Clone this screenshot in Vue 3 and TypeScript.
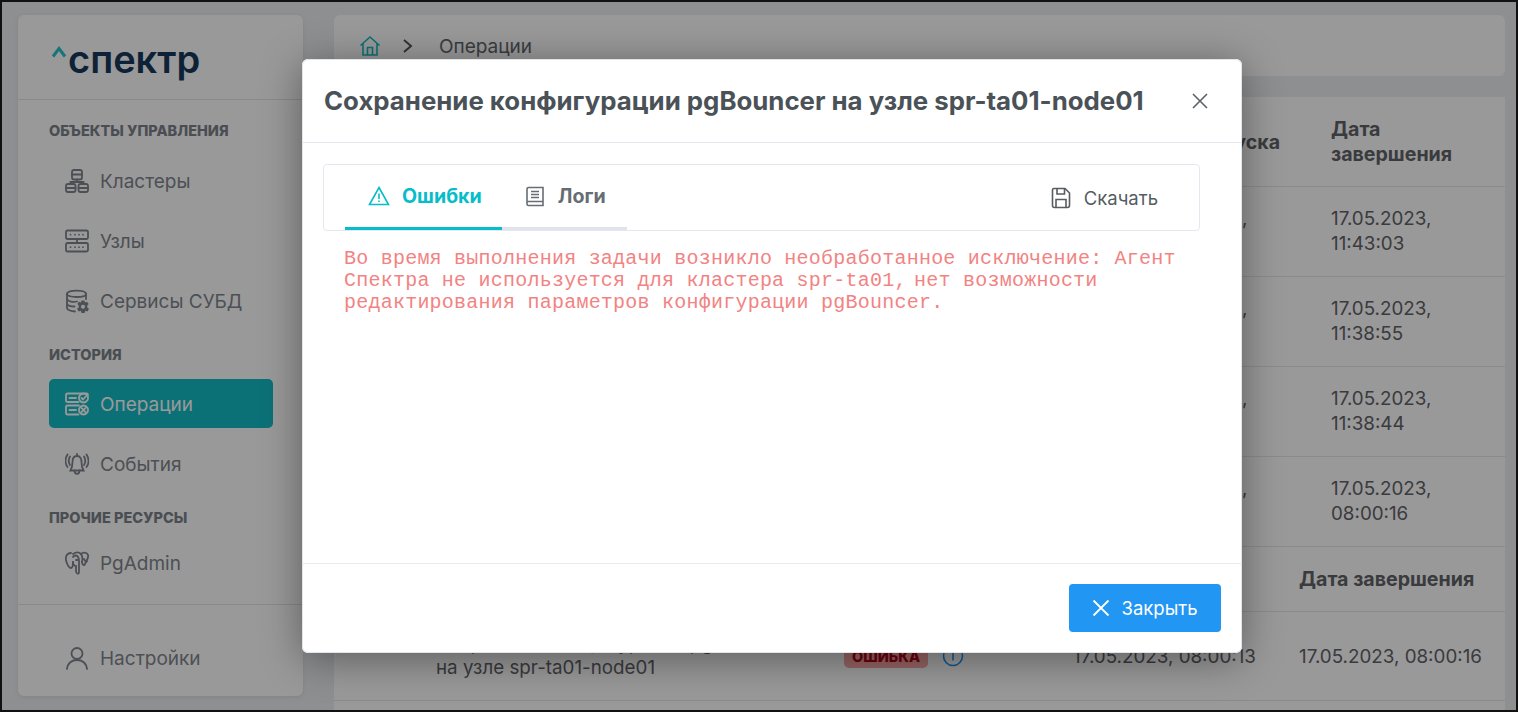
<template>
  <div class="page">
    <aside class="sidebar">
      <div class="logo">
        <svg class="logo-caret" width="16" height="12" viewBox="0 0 16 12">
          <path d="M2 10.5 L8 2.5 L14 10.5" fill="none" stroke="#22c3cc" stroke-width="3" />
        </svg>
        <span class="logo-text">спектр</span>
      </div>

      <nav class="nav">
        <template v-for="section in sections" :key="section.title">
          <div class="nav-title">{{ section.title }}</div>
          <a
            v-for="item in section.items"
            :key="item.label"
            class="nav-item"
            :class="{ active: item.active, tight: item.label === 'PgAdmin' }"
          >
            <svg class="nav-icon" width="24" height="24" viewBox="0 0 24 24">
              <path v-for="d in item.icon" :key="d" :d="d" />
              <path v-for="d in item.solid ?? []" :key="d" :d="d" class="solid" />
            </svg>
            <span>{{ item.label }}</span>
          </a>
        </template>
      </nav>

      <div class="nav-bottom">
        <a class="nav-item">
          <svg class="nav-icon" width="24" height="24" viewBox="0 0 24 24">
            <circle cx="12" cy="7.5" r="5.5" />
            <path d="M2 23 C2.5 17 7 14 12 14 C17 14 21.5 17 22 23" />
          </svg>
          <span>Настройки</span>
        </a>
      </div>
    </aside>

    <main class="content">
      <header class="crumbs">
        <svg width="22" height="22" viewBox="0 0 22 22" class="home">
          <path d="M1.5 10.5 L11 2 L20.5 10.5 M4 8.5 V20 H18 V8.5 M8.5 20 V12.5 H13.5 V20" />
        </svg>
        <svg width="12" height="16" viewBox="0 0 12 16" class="chevron">
          <path d="M2 2 L9 8 L2 14" />
        </svg>
        <span>Операции</span>
      </header>

      <section class="tables">
        <div class="grid-head">
          <div class="col-name"></div>
          <div class="col-start">Дата запуска</div>
          <div class="col-end">Дата завершения</div>
        </div>
        <div v-for="row in rows" :key="row" class="grid-row">
          <div class="col-name"></div>
          <div class="col-start">17.05.2023,</div>
          <div class="col-end">{{ row }}</div>
        </div>

        <div class="wide-head">
          <div class="wide-end">Дата завершения</div>
        </div>
        <div class="wide-row">
          <div class="wide-name">Сохранение конфигурации pg<br />на узле spr-ta01-node01</div>
          <div class="wide-status">
            <span class="badge">ОШИБКА</span>
            <svg width="22" height="22" viewBox="0 0 22 22" class="info">
              <circle cx="11" cy="11" r="9.5" />
              <path d="M11 6.5 V15.5" />
            </svg>
          </div>
          <div class="wide-start">17.05.2023, 08:00:13</div>
          <div class="wide-end">17.05.2023, 08:00:16</div>
        </div>
      </section>
    </main>

    <div class="overlay">
      <div class="modal">
        <div class="modal-head">
          <h2>Сохранение конфигурации pgBouncer на узле spr-ta01-node01</h2>
          <svg width="16" height="16" viewBox="0 0 16 16" class="close">
            <path d="M1 1 L15 15 M15 1 L1 15" />
          </svg>
        </div>

        <div class="modal-body">
          <div class="tabs">
            <div class="tab selected">
              <svg width="22" height="20" viewBox="0 0 22 20">
                <path d="M11 1.5 L20.5 18.5 H1.5 Z" />
                <path d="M11 7.5 V13 M11 14.5 V16" />
              </svg>
              <span>Ошибки</span>
            </div>
            <div class="tab">
              <svg width="20" height="21" viewBox="0 0 20 21">
                <path d="M3.5 1.5 H18 V19.5 H3.5 Q2 19.5 2 18 V3 Q2 1.5 3.5 1.5 Z M2 15.5 H18" />
                <path d="M6 5.5 H14 M6 8.5 H14 M6 11.5 H14" />
              </svg>
              <span>Логи</span>
            </div>
            <div class="download">
              <svg width="20" height="22" viewBox="0 0 20 22">
                <path d="M3 1.5 H14 L18.5 6 V18.5 Q18.5 20.5 16.5 20.5 H3.5 Q1.5 20.5 1.5 18.5 V3 Q1.5 1.5 3 1.5 Z" />
                <path d="M6 1.5 V7 H13.5 V1.5 M5 20.5 V12.5 H15 V20.5" />
              </svg>
              <span>Скачать</span>
            </div>
          </div>
          <div class="error-text">
            <div>Во время выполнения задачи возникло необработанное исключение: Агент</div>
            <div>Спектра не используется для кластера spr-ta01,<span class="narrow">{{ ' ' }}</span>нет возможности</div>
            <div>редактирования параметров конфигурации pgBouncer.</div>
          </div>
        </div>

        <div class="modal-foot">
          <button class="close-btn" type="button">
            <svg width="18" height="18" viewBox="0 0 18 18">
              <path d="M1.5 1.5 L16.5 16.5 M16.5 1.5 L1.5 16.5" />
            </svg>
            Закрыть
          </button>
        </div>
      </div>
    </div>
  </div>
</template>

<script setup lang="ts">
interface NavItem {
  label: string
  icon: string[]
  solid?: string[]
  active?: boolean
}

// rounded rectangle as a path string
const box = (x: number, y: number, w: number, h: number, r = 1.5) =>
  `M${x + r} ${y} H${x + w - r} Q${x + w} ${y} ${x + w} ${y + r} V${y + h - r} Q${x + w} ${y + h} ${x + w - r} ${y + h} H${x + r} Q${x} ${y + h} ${x} ${y + h - r} V${y + r} Q${x} ${y} ${x + r} ${y} Z`

const dot = (cx: number, cy: number) => `M${cx} ${cy} h0.01`

const sections: { title: string; items: NavItem[] }[] = [
  {
    title: 'ОБЪЕКТЫ УПРАВЛЕНИЯ',
    items: [
      {
        label: 'Кластеры',
        icon: [
          box(7, 1, 10, 9.5, 2),
          'M7 5.5 H17',
          'M12 10.5 V13 M5.5 15 V13 H18.5 V15',
          box(1, 15, 9.5, 8, 2),
          'M1 19 H10.5',
          box(13.5, 15, 9.5, 8, 2),
          'M13.5 19 H23'
        ]
      },
      {
        label: 'Узлы',
        icon: [
          box(1, 1.5, 22, 8.5),
          box(1, 14, 22, 8.5),
          'M12 10 V14',
          dot(5.5, 5.7),
          dot(10, 5.7),
          dot(14, 5.7),
          dot(18, 5.7),
          dot(5.5, 18.2),
          dot(10, 18.2),
          dot(14, 18.2),
          dot(18, 18.2)
        ]
      },
      {
        label: 'Сервисы СУБД',
        icon: [
          'M2 5 C2 0.5 21 0.5 21 5 C21 9 2 9 2 5 Z',
          'M2 5 V19 C2 21 5 22 10 22.5',
          'M21 5 V10',
          'M2 10 C3 12.5 8 13.5 12 12.5',
          'M2 15 C3 17 6 17.5 9.5 17.5'
        ],
        solid: [
          'M16.5 11.5 H19.5 L20 13.5 L22 12.7 L23.7 15 L22.3 16.5 L22.3 18.5 L24 19.8 L22.4 22.4 L20.3 21.8 L19.5 24 H16.5 L15.8 21.8 L13.7 22.4 L12 19.8 L13.7 18.5 L13.7 16.5 L12.3 15 L14 12.7 L16 13.5 Z M18 15.7 a2 2 0 1 0 0.01 0 Z'
        ]
      }
    ]
  },
  {
    title: 'ИСТОРИЯ',
    items: [
      {
        label: 'Операции',
        active: true,
        icon: [
          'M13.5 10 H2.5 Q1 10 1 8.5 V3 Q1 1.5 2.5 1.5 H21.5 Q23 1.5 23 3',
          'M13.5 22.5 H2.5 Q1 22.5 1 21 V15 Q1 13.5 2.5 13.5 H14',
          'M4.5 6 H11 M4.5 18 H11',
          'M18.5 1.5 a4.5 4.5 0 1 0 0.01 0 Z M16.5 6 L18 7.5 L20.7 4.5',
          'M18.5 13.5 a4.5 4.5 0 1 0 0.01 0 Z M16.7 16.2 L20.3 19.8 M20.3 16.2 L16.7 19.8'
        ]
      },
      {
        label: 'События',
        icon: [
          'M12 4 C8.5 4 7.5 7 7.5 10 C7.5 14 7 16 5.5 18.5 H18.5 C17 16 16.5 14 16.5 10 C16.5 7 15.5 4 12 4 Z',
          'M9.5 18.5 C9.5 23 14.5 23 14.5 18.5',
          'M12 2 V4',
          'M5 4.5 C3.5 7 3.5 10.5 5 13 M19 4.5 C20.5 7 20.5 10.5 19 13',
          'M2.5 2.5 C0 6.5 0 11.5 2.5 15 M21.5 2.5 C24 6.5 24 11.5 21.5 15'
        ]
      }
    ]
  },
  {
    title: 'ПРОЧИЕ РЕСУРСЫ',
    items: [
      {
        label: 'PgAdmin',
        icon: [
          'M6 2 C1 2 0 7 1.5 11 C2.5 14 4 17 6 17 C8 17 8 13 8 11',
          'M8 3 C11 1 14 1 16 3 C18 1 22 1 23 4 C24 7 21 10 20 13 C19.5 15 17 14 17 11',
          'M8 6 C9 4 12 4 13 6 C14.5 8 14 11 14 14 V21 C14 23.5 11 23 11 20 V15 C9 15 8 13 8 11',
          'M16 3 C18 6 17.5 9 17 11 M11 9 H12.5 M19 8 C20.5 11 21 11 22 10.5'
        ]
      }
    ]
  }
]

const rows = ['17.05.2023,\n11:43:03', '17.05.2023,\n11:38:55', '17.05.2023,\n11:38:44', '17.05.2023,\n08:00:16']
</script>

<style>
html,
body {
  margin: 0;
  overflow: hidden;
}
</style>

<style scoped>
.page {
  position: relative;
  box-sizing: border-box;
  display: flex;
  gap: 31px;
  height: 712px;
  padding: 13px 11px 0 16px;
  overflow: hidden;
  border: 2px solid #111;
  background: #eceef2;
  font-family: Inter, "Noto Sans", sans-serif;
  font-size: 19px;
  color: #7f868e;
}

/* sidebar */
.sidebar {
  display: flex;
  flex-direction: column;
  flex: 0 0 285px;
  height: 681px;
  border-radius: 6px;
  background: #fff;
  box-shadow: 0 1px 4px rgba(0, 0, 0, 0.08);
}

.logo {
  display: flex;
  align-items: flex-start;
  box-sizing: border-box;
  height: 85px;
  padding: 21px 0 0 33px;
  border-bottom: 1px solid #e3e5e8;
}

.logo-caret {
  margin: 10px 1px 0 0;
}

.logo-text {
  font-size: 38px;
  line-height: 46px;
  font-weight: 600;
  color: #17395a;
}

.nav {
  padding: 1px 30px 0 31px;
}

.nav-title {
  height: 16px;
  margin: 22px 0 16px;
  font-size: 14.5px;
  line-height: 16px;
  font-weight: 800;
  color: #7c838b;
  white-space: nowrap;
}

.nav-title:first-child {
  margin-bottom: 17px;
}

.nav-item {
  display: flex;
  align-items: center;
  gap: 11px;
  height: 49px;
  margin-bottom: 11px;
  padding-left: 16px;
  border-radius: 5px;
}

.nav-item span {
  margin-top: 2px;
}

.nav-item:last-child {
  margin-bottom: 0;
}

.nav-item.tight {
  margin-top: -4px;
}

.nav-item.active {
  background: #14bcc6;
  color: #fff;
}

.nav-icon {
  flex: none;
  fill: none;
  stroke: currentColor;
  stroke-width: 1.8;
  stroke-linecap: round;
}

.nav-icon .solid {
  fill: currentColor;
  fill-rule: evenodd;
  stroke: none;
}

.nav-bottom {
  display: flex;
  align-items: center;
  height: 91px;
  margin-top: auto;
  padding-left: 31px;
  border-top: 1px solid #e3e5e8;
}

.nav-bottom .nav-item {
  margin: 14px 0 0;
}

/* main */
.content {
  display: flex;
  flex-direction: column;
  flex: 1;
  gap: 21px;
  min-width: 0;
}

.crumbs {
  display: flex;
  flex: none;
  align-items: center;
  gap: 15px;
  box-sizing: border-box;
  height: 61px;
  padding: 2px 0 0 25px;
  border-radius: 6px;
  background: #fff;
  color: #62676d;
}

.home {
  margin-top: -2px;
  fill: none;
  stroke: #14bcc6;
  stroke-width: 1.6;
}

.chevron {
  margin: -2px 10px 0 6px;
  fill: none;
  stroke: #555;
  stroke-width: 2;
}

.tables {
  flex: 1;
  background: #fff;
  font-size: 18.8px;
  color: #5f6368;
}

.grid-head,
.grid-row,
.wide-row,
.wide-head {
  display: grid;
  box-sizing: border-box;
  border-bottom: 1px solid #e6e8ea;
}

.grid-head,
.grid-row {
  grid-template-columns: 813px 184px 1fr;
  align-items: center;
}

.grid-head {
  height: 90px;
  padding-top: 1px;
  font-size: 19.6px;
  font-weight: 700;
}

.grid-row {
  height: 90px;
  padding-bottom: 2px;
  white-space: pre-line;
  line-height: 25px;
}

.col-end {
  width: 130px;
  line-height: 25px;
}

.col-start {
  white-space: nowrap;
}

/* the time on the second line of this column stays behind the dialog */
.grid-row .col-start {
  margin-bottom: 25px;
}

.wide-head {
  grid-template-columns: 1fr;
  align-items: center;
  height: 66px;
  margin-top: -1px;
  font-size: 19.6px;
  font-weight: 700;
}

.wide-head .wide-end {
  margin-left: 965px;
}

.wide-row {
  grid-template-columns: 102px 408px 229px 226px 1fr;
  align-items: center;
  height: 89px;
}

.wide-name {
  grid-column: 2;
  line-height: 24px;
  white-space: nowrap;
}

.wide-status {
  display: flex;
  align-items: center;
  gap: 14px;
}

.badge {
  padding: 3px 8px;
  border-radius: 5px;
  background: #f8a6a6;
  color: #b3001b;
  font-size: 14.5px;
  font-weight: 800;
}

.info {
  fill: none;
  stroke: #2196f3;
  stroke-width: 1.6;
}

/* modal */
.overlay {
  position: absolute;
  inset: 0;
  display: flex;
  justify-content: flex-start;
  background: rgba(0, 0, 0, 0.4);
}

.modal {
  display: flex;
  flex-direction: column;
  box-sizing: border-box;
  width: 940px;
  height: 594px;
  margin: 57px 0 0 300px;
  border-radius: 6px;
  background: #fff;
  box-shadow: 0 6px 40px rgba(0, 0, 0, 0.4), inset 0 0 0 1px #e2e4e7;
  color: #4a5258;
}

.modal-head {
  display: flex;
  flex: none;
  align-items: center;
  justify-content: space-between;
  box-sizing: border-box;
  height: 84px;
  padding: 0 33px 0 22px;
  border-bottom: 1px solid #e4e8ee;
}

h2 {
  margin: 0;
  font-size: 25.8px;
  font-weight: 700;
  white-space: nowrap;
}

.close {
  margin: 0 1px 0 0;
  fill: none;
  stroke: #5a6268;
  stroke-width: 1.6;
}

.modal-body {
  flex: 1;
  padding: 21px 42px 0 21px;
}

.tabs {
  display: flex;
  align-items: stretch;
  box-sizing: border-box;
  height: 67px;
  padding-left: 21px;
  border: 1px solid #e4e8ee;
  border-radius: 4px;
}

.tab {
  display: flex;
  align-items: center;
  gap: 13px;
  padding: 0 21px 0 23px;
  border-bottom: 3px solid #e0e3e9;
  font-weight: 700;
  font-size: 19.6px;
  color: #666d74;
}

.tab svg {
  fill: none;
  stroke: currentColor;
  stroke-width: 1.6;
}

.tab.selected {
  gap: 12px;
  padding-right: 20px;
  border-bottom-color: #06bdc9;
  color: #06bdc9;
}

.download {
  display: flex;
  align-items: center;
  gap: 13px;
  margin-left: auto;
  padding-right: 41px;
  font-size: 18.5px;
  color: #555c62;
}

.download svg {
  fill: none;
  stroke: currentColor;
  stroke-width: 1.6;
}

.error-text {
  margin: 16.5px 0 0 21px;
  font-family: "Liberation Mono", monospace;
  font-size: 20px;
  line-height: 22.4px;
  letter-spacing: 0.23px;
  white-space: pre;
  color: #f28383;
}

.narrow {
  font-size: 12px;
  line-height: 0;
}

.modal-foot {
  display: flex;
  flex: none;
  align-items: center;
  justify-content: flex-end;
  box-sizing: border-box;
  height: 90px;
  padding: 0 21px 2px 0;
  border-top: 1px solid #e8eaec;
}

.close-btn {
  display: flex;
  align-items: center;
  justify-content: center;
  gap: 11px;
  width: 152px;
  height: 48px;
  border: 0;
  border-radius: 4px;
  background: #2196f3;
  font: inherit;
  font-size: 18.5px;
  color: #fff;
}

.close-btn svg {
  fill: none;
  stroke: #fff;
  stroke-width: 1.8;
}
</style>
